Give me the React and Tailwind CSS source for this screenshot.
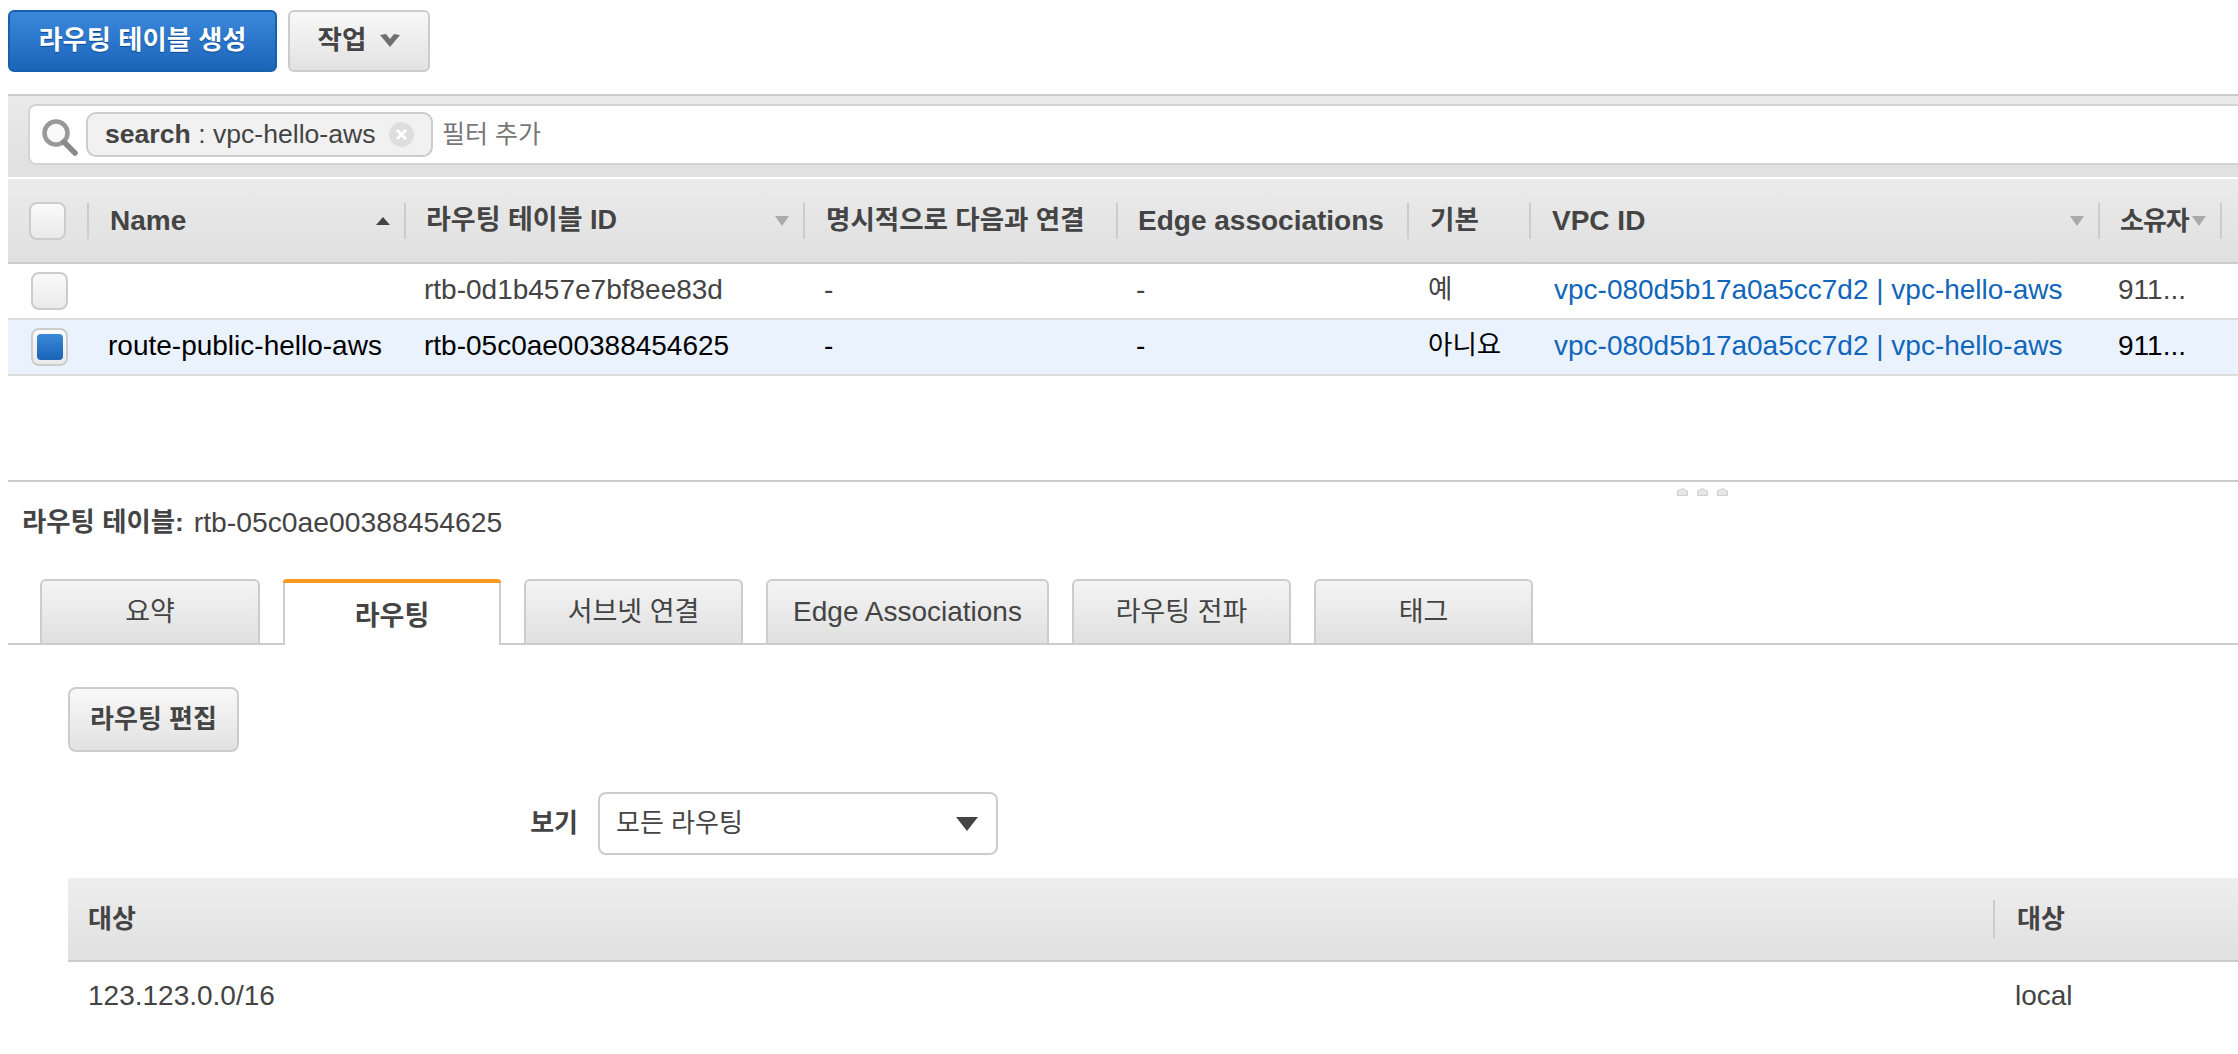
const FONT = "font-['Liberation_Sans','Noto_Sans_CJK_KR',sans-serif]";

function Arrow({ up = false }) {
  return up ? (
    <svg width="14" height="8" viewBox="0 0 14 8" className="shrink-0"><path d="M0 8 L7 0 L14 8 Z" fill="#444" /></svg>
  ) : (
    <svg width="14" height="10" viewBox="0 0 14 10" className="shrink-0"><path d="M0 0 L14 0 L7 10 Z" fill="#aaa" /></svg>
  );
}

function Checkbox({ checked }) {
  return (
    <div className="w-[37px] h-[38px] rounded-[8px] border-2 border-[#ccc] bg-gradient-to-b from-[#fafafa] to-[#eaeaea] flex items-center justify-center">
      {checked && <div className="w-[26px] h-[26px] rounded-[4px] bg-gradient-to-b from-[#3b88d8] to-[#1a64b8]" />}
    </div>
  );
}

const cols = [
  { w: "w-[317px]", label: "Name", pl: "pl-[21px]", arrow: "up", arrowPr: "pr-[14px]", size: "text-[28px]" },
  { w: "w-[399px]", label: "라우팅 테이블 ID", pl: "pl-[20px]", arrow: "down", arrowPr: "pr-[14px]", size: "text-[27px]" },
  { w: "w-[313px]", label: "명시적으로 다음과 연결", pl: "pl-[21px]", size: "text-[26.5px]" },
  { w: "w-[291px]", label: "Edge associations", pl: "pl-[20px]", size: "text-[28px]" },
  { w: "w-[122px]", label: "기본", pl: "pl-[21px]", size: "text-[26.5px]" },
  { w: "w-[569px]", label: "VPC ID", pl: "pl-[21px]", arrow: "down", arrowPr: "pr-[14px]", size: "text-[28px]" },
  { w: "w-[122px]", label: "소유자", pl: "pl-[20px]", arrow: "down", arrowPr: "pr-[14px]", size: "text-[26px] tracking-[-1px]" },
];

function HeaderCell({ c }) {
  return (
    <div className={`${c.w} shrink-0 h-[36px] border-l-2 border-[#ccc] flex items-center justify-between ${c.pl} ${c.arrowPr || ""}`}>
      <span className={`${c.size} font-bold text-[#444] whitespace-nowrap leading-none`}>{c.label}</span>
      {c.arrow && <Arrow up={c.arrow === "up"} />}
    </div>
  );
}

function Cell({ w, pl, children, cls = "text-[28px]" }) {
  return <div className={`${w} ${pl} shrink-0 whitespace-nowrap pb-[2px] ${cls}`}>{children}</div>;
}

function Row({ checked, name, id, basic, text }) {
  return (
    <div className={`h-[56px] border-b-2 border-[#ddd] flex items-center ${text} ${checked ? "bg-[#eaf2fd]" : "bg-white"}`}>
      <div className="w-[79px] shrink-0 pl-[23px]"><Checkbox checked={checked} /></div>
      <Cell w="w-[317px]" pl="pl-[21px]">{name}</Cell>
      <Cell w="w-[399px]" pl="pl-[20px]">{id}</Cell>
      <Cell w="w-[313px]" pl="pl-[21px]">-</Cell>
      <Cell w="w-[291px]" pl="pl-[20px]">-</Cell>
      <Cell w="w-[122px]" pl="pl-[21px]" cls="text-[26.5px]">{basic}</Cell>
      <Cell w="w-[569px]" pl="pl-[25px]" cls="text-[28px] text-[#1166bb]">vpc-080d5b17a0a5cc7d2 | vpc-hello-aws</Cell>
      <Cell w="w-[122px]" pl="pl-[20px]">911...</Cell>
    </div>
  );
}

function Tab({ w, children, active, size = "text-[27px]" }) {
  if (active) {
    return (
      <div className={`${w} h-[66px] -mb-[2px] bg-white border-x-2 border-[#ccc] rounded-t-[4px] relative flex items-center justify-center pt-[8px] ${size} font-bold text-[#444]`}>
        <div className="absolute -left-[2px] -right-[2px] top-0 h-[4px] rounded-t-[4px] bg-[#f7991c]" />
        {children}
      </div>
    );
  }
  return (
    <div className={`${w} h-[64px] border-2 border-b-0 border-[#ccc] rounded-t-[6px] bg-gradient-to-b from-[#f4f4f4] to-[#e0e0e0] flex items-center justify-center ${size} text-[#444] whitespace-nowrap`}>
      {children}
    </div>
  );
}

export default function App() {
  return (
    <div className={`${FONT} w-[2238px] h-[1054px] overflow-hidden bg-white pl-[8px] text-[#444]`}>
      {/* toolbar */}
      <div className="flex gap-[11px] pt-[10px] h-[94px]">
        <div className="w-[269px] h-[62px] rounded-[6px] border-2 border-[#1a5fae] bg-gradient-to-b from-[#3a88dc] to-[#1b65b9] flex items-center justify-center text-white font-bold text-[26.3px] [text-shadow:0_1px_1px_#0d4a90]">
          라우팅 테이블 생성
        </div>
        <div className="w-[142px] h-[62px] rounded-[6px] border-2 border-[#ccc] bg-gradient-to-b from-[#f8f8f8] to-[#e2e2e2] flex items-center justify-center gap-[14px] text-[#444] font-bold text-[26.5px]">
          작업
          <svg width="20" height="14" viewBox="0 0 20 14"><path d="M0 1 L6 0 L10 5 L14 0 L20 1 L10 13 Z" fill="#6f6f6f" /></svg>
        </div>
      </div>

      {/* filter bar */}
      <div className="h-[83px] border-t-2 border-[#ccc] bg-gradient-to-b from-[#eaeaea] to-[#e0e0e0] pl-[20px] pt-[8px]">
        <div className="h-[61px] rounded-l-[8px] border-2 border-r-0 border-[#d4d4d4] bg-white flex items-center pl-[12px]">
          <svg width="38" height="44" viewBox="0 0 38 44" className="shrink-0">
            <circle cx="14" cy="20" r="11.5" fill="#fafafa" stroke="#999" strokeWidth="4.5" />
            <path d="M22 29 L33 40" stroke="#8a8a8a" strokeWidth="5.5" strokeLinecap="round" />
          </svg>
          <div className="ml-[6px] w-[347px] h-[45px] rounded-[10px] border-2 border-[#ccc] bg-[#f1f1f1] flex items-center pl-[17px] text-[26.6px] whitespace-nowrap">
            <span className="font-bold">search</span>
            <span>&nbsp;: vpc-hello-aws</span>
            <span className="ml-[13px] w-[25px] h-[25px] rounded-full bg-[#dedede] flex items-center justify-center shrink-0">
              <svg width="13" height="13" viewBox="0 0 13 13"><path d="M2 2 L11 11 M11 2 L2 11" stroke="#fff" strokeWidth="3" /></svg>
            </span>
          </div>
          <span className="ml-[9px] text-[25px] text-[#777]">필터 추가</span>
        </div>
      </div>

      {/* table */}
      <div className="mt-[2px] h-[85px] border-b-2 border-[#ccc] bg-gradient-to-b from-[#ebebeb] to-[#e0e0e0] flex items-center">
        <div className="w-[79px] shrink-0 pl-[21px]"><Checkbox /></div>
        {cols.map((c) => <HeaderCell key={c.label} c={c} />)}
        <div className="h-[36px] border-l-2 border-[#ccc]" />
      </div>
      <Row name="" id="rtb-0d1b457e7bf8ee83d" basic="예" text="text-[#444]" />
      <Row checked name="route-public-hello-aws" id="rtb-05c0ae00388454625" basic="아니요" text="text-black" />

      {/* splitter */}
      <div className="mt-[104px] border-t-2 border-[#ccc] relative">
        <div className="absolute left-[1669px] top-[6px] flex gap-[9px]">
          {[0, 1, 2].map((i) => (
            <svg key={i} width="11" height="8" viewBox="0 0 11 8"><path d="M0.5 7.5 L0.5 3 L5.5 0.5 L10.5 3 L10.5 7.5 Z" fill="#e6e6e6" stroke="#cfcfcf" strokeWidth="1" /></svg>
          ))}
        </div>
      </div>

      {/* details */}
      <div className="h-[57px] pl-[14px] pt-[23px] flex items-center gap-[10px] whitespace-nowrap">
        <span className="font-bold text-[26.4px] leading-[32px]">라우팅 테이블:</span>
        <span className="text-[28.3px] leading-[32px]">rtb-05c0ae00388454625</span>
      </div>
      <div className="mt-[41px] h-[65px] border-b-2 border-[#ccc] flex items-end gap-[23px] pl-[32px]">
        <Tab w="w-[220px]">요약</Tab>
        <Tab w="w-[218px]" active>라우팅</Tab>
        <Tab w="w-[219px]">서브넷 연결</Tab>
        <Tab w="w-[283px]" size="text-[28px]">Edge Associations</Tab>
        <Tab w="w-[219px]">라우팅 전파</Tab>
        <Tab w="w-[219px]">태그</Tab>
      </div>

      <div className="ml-[60px] mt-[42px] w-[171px] h-[65px] rounded-[8px] border-2 border-[#ccc] bg-gradient-to-b from-[#f8f8f8] to-[#e2e2e2] flex items-center justify-center font-bold text-[26px] text-[#444]">
        라우팅 편집
      </div>

      <div className="mt-[40px] flex items-center h-[63px]">
        <div className="w-[570px] text-right font-bold text-[26px]">보기</div>
        <div className="ml-[20px] w-[400px] h-[63px] rounded-[8px] border-2 border-[#ccc] bg-white flex items-center justify-between pl-[16px] pr-[18px] text-[26px]">
          모든 라우팅
          <svg width="22" height="14" viewBox="0 0 22 14"><path d="M0 0 L22 0 L11 14 Z" fill="#444" /></svg>
        </div>
      </div>

      <div className="ml-[60px] mt-[23px] h-[84px] border-b-2 border-[#ccc] bg-gradient-to-b from-[#eeeeee] to-[#e0e0e0] flex items-center font-bold text-[26px]">
        <div className="w-[1925px] pl-[20px]">대상</div>
        <div className="h-[38px] border-l-2 border-[#ccc] pl-[22px] flex items-center">대상</div>
      </div>
      <div className="ml-[60px] h-[68px] flex items-center text-[28px]">
        <div className="w-[1927px] pl-[20px]">123.123.0.0/16</div>
        <div className="pl-[20px]">local</div>
      </div>
    </div>
  );
}
